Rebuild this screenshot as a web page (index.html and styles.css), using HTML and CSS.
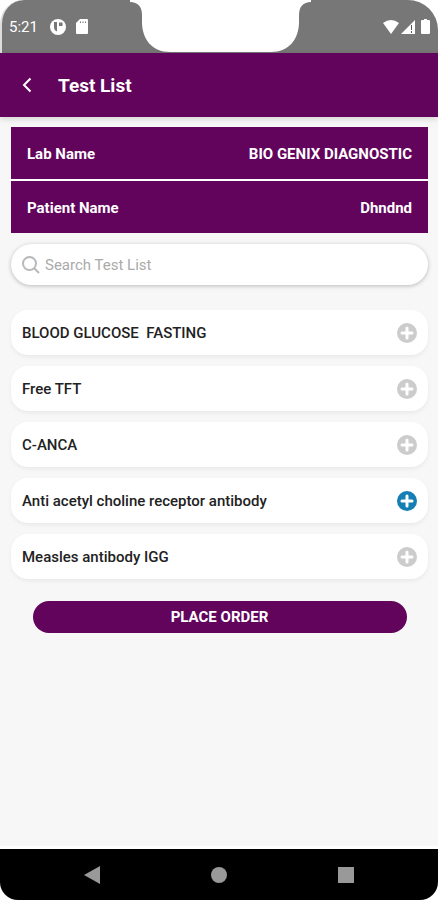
FILE: index.html
```html
<!DOCTYPE html>
<html lang="en">
<head>
  <meta charset="UTF-8" />
  <meta name="viewport" content="width=device-width, initial-scale=1" />
  <title>Test List</title>
  <link rel="stylesheet" href="styles.css">
</head>
<body>
  <div class="phone">
    <!-- Status bar -->
    <div class="status-bar">
      <div class="status-left">
        <span class="clock">5:21</span>
        <svg width="16" height="16" viewBox="0 0 16 16">
          <circle cx="8" cy="8" r="8" fill="#fff" />
          <path d="M4 3h3v9.500Q4 11.500 4 8z" fill="#777" />
          <path d="M9 3.500h3.500v3.500H9z" fill="#777" />
        </svg>
        <svg width="12" height="15" viewBox="0 0 12 15">
          <path d="M4 0h7a1 1 0 0 1 1 1v13a1 1 0 0 1-1 1H1a1 1 0 0 1-1-1V4z" fill="#fff" />
          <path d="M4 2.500h1v1.500H4zM6.500 2.500h1v1.500h-1zM9 2.500h1v1.500H9z" fill="#777" />
        </svg>
      </div>
      <svg class="notch" width="181" height="52" viewBox="0 0 181 52">
        <path d="M0 0v2c8 0 12 5 12 13v7c0 17 10 30 28 30h101c18 0 28-13 28-30v-7c0-8 4-13 12-13V0z" fill="#fff" />
      </svg>
      <div class="status-right">
        <svg width="16" height="14" viewBox="0 0 16 14">
          <path d="M0 3Q8-3 16 3L8 14z" fill="#fff" />
        </svg>
        <svg width="14" height="14" viewBox="0 0 14 14">
          <path d="M14 0v14H0z" fill="#fff" />
          <path d="M10 5h1v5h-1zM10 11h1v2h-1z" fill="#555" />
        </svg>
        <svg class="battery" width="9" height="15" viewBox="0 0 9 15">
          <path d="M3 0h3v1h2a1 1 0 0 1 1 1v12a1 1 0 0 1-1 1H1a1 1 0 0 1-1-1V2a1 1 0 0 1 1-1h2z" fill="#fff" />
        </svg>
      </div>
    </div>

    <!-- Title bar -->
    <header class="title-bar">
      <button class="back" type="button" aria-label="Back">
        <svg width="10" height="16" viewBox="0 0 10 16">
          <path d="M8.500 1.500L2 8l6.500 6.500" fill="none" stroke="#fff" stroke-width="2" />
        </svg>
      </button>
      <h1>Test List</h1>
    </header>

    <main class="content">
      <dl class="details">
        <div class="detail-row">
          <dt>Lab Name</dt>
          <dd>BIO GENIX DIAGNOSTIC</dd>
        </div>
        <div class="detail-row">
          <dt>Patient Name</dt>
          <dd>Dhndnd</dd>
        </div>
      </dl>

      <label class="search">
        <svg width="18" height="18" viewBox="0 0 18 18">
          <circle cx="7.500" cy="7.500" r="6.500" fill="none" stroke="#b9b9b9" stroke-width="2" />
          <path d="M12 12l5 5" stroke="#b9b9b9" stroke-width="2" />
        </svg>
        <input type="text" placeholder="Search Test List" aria-label="Search Test List" />
      </label>

      <ul class="tests">
        <li class="test">
          <span class="test-name">BLOOD GLUCOSE  FASTING</span>
          <button class="add" type="button" aria-label="Add BLOOD GLUCOSE FASTING">
            <svg width="20" height="20" viewBox="0 0 20 20"><circle cx="10" cy="10" r="10" /><path d="M10 5v10M5 10h10" /></svg>
          </button>
        </li>
        <li class="test">
          <span class="test-name">Free TFT</span>
          <button class="add" type="button" aria-label="Add Free TFT">
            <svg width="20" height="20" viewBox="0 0 20 20"><circle cx="10" cy="10" r="10" /><path d="M10 5v10M5 10h10" /></svg>
          </button>
        </li>
        <li class="test">
          <span class="test-name">C-ANCA</span>
          <button class="add" type="button" aria-label="Add C-ANCA">
            <svg width="20" height="20" viewBox="0 0 20 20"><circle cx="10" cy="10" r="10" /><path d="M10 5v10M5 10h10" /></svg>
          </button>
        </li>
        <li class="test">
          <span class="test-name">Anti acetyl choline receptor antibody</span>
          <button class="add selected" type="button" aria-label="Add Anti acetyl choline receptor antibody">
            <svg width="20" height="20" viewBox="0 0 20 20"><circle cx="10" cy="10" r="10" /><path d="M10 5v10M5 10h10" /></svg>
          </button>
        </li>
        <li class="test">
          <span class="test-name">Measles antibody IGG</span>
          <button class="add" type="button" aria-label="Add Measles antibody IGG">
            <svg width="20" height="20" viewBox="0 0 20 20"><circle cx="10" cy="10" r="10" /><path d="M10 5v10M5 10h10" /></svg>
          </button>
        </li>
      </ul>

      <button class="place-order" type="button">PLACE ORDER</button>
    </main>

    <!-- System navigation -->
    <nav class="system-nav">
      <button type="button" aria-label="Back">
        <svg width="18" height="20" viewBox="0 0 18 20"><path d="M17 1v18L1 10z" /></svg>
      </button>
      <button type="button" aria-label="Home">
        <svg width="18" height="20" viewBox="0 0 18 20"><circle cx="9" cy="10" r="8" /></svg>
      </button>
      <button type="button" aria-label="Recent apps">
        <svg width="18" height="20" viewBox="0 0 18 20"><path d="M1 2h16v16H1z" /></svg>
      </button>
    </nav>
  </div>
</body>
</html>
```
FILE: styles.css
```css
/* Basic reset */
* {
  box-sizing: border-box;
}
body {
  margin: 0;
  background: #fff;
  font-family: Roboto, "Liberation Sans", sans-serif;
}
button {
  padding: 0;
  border: none;
  background: none;
  font-family: inherit;
  cursor: pointer;
}
svg {
  display: block;
}
.phone {
  display: flex;
  flex-direction: column;
  min-height: 100vh;
}
/* Status bar */
.status-bar {
  display: grid;
  grid-template-columns: 1fr auto 1fr;
  height: 53px;
  background: #777;
  border-left: 2px solid #ddd;
  border-radius: 24px 30px 0 0;
  color: #fff;
}
.status-left,
.status-right {
  display: flex;
  align-items: center;
}
.status-left {
  gap: 10px;
  padding-left: 7px;
}
.status-right {
  justify-content: flex-end;
  gap: 2px;
  padding-right: 8px;
}
.battery {
  margin-left: 4px;
}
.clock {
  margin-right: 2px;
  font-size: 15px;
}
/* Title bar */
.title-bar {
  display: flex;
  align-items: center;
  gap: 26px;
  height: 64px;
  padding: 0 22px;
  background: #62045c;
  color: #fff;
  z-index: 1; /* keeps the shadow above the content */
  box-shadow: 0 2px 6px rgba(0, 0, 0, 0.15);
}
.title-bar h1 {
  margin: 0;
  font-size: 19px;
}
/* Page content */
.content {
  flex: 1;
  padding: 10px 10px 10px 11px;
  background: #f7f7f7;
  border-bottom: 3px solid #fff;
}
/* Lab and patient rows */
.details {
  display: flex;
  flex-direction: column;
  gap: 2px;
  margin: 0 0 11px;
  background: #fff;
}
.detail-row {
  display: flex;
  align-items: center;
  justify-content: space-between;
  height: 52px;
  padding: 2px 16px 0;
  background: #62045c;
  color: #fff;
  font-size: 15px;
  font-weight: bold;
}
.detail-row dd {
  margin: 0;
}
/* Search box */
.search {
  display: flex;
  align-items: center;
  gap: 5px;
  height: 41px;
  margin-bottom: 25px;
  padding: 0 11px;
  border-radius: 21px;
  background: #fff;
  box-shadow: 0 1px 4px rgba(0, 0, 0, 0.25);
}
.search input {
  flex: 1;
  min-width: 0;
  padding: 0;
  border: none;
  outline: none;
  background: none;
  font-family: inherit;
  font-size: 15px;
}
.search input::placeholder {
  color: #aaa;
}
/* Test cards */
.tests {
  display: flex;
  flex-direction: column;
  gap: 11px;
  margin: 0 0 22px;
  padding: 0;
  list-style: none;
}
.test {
  display: flex;
  align-items: center;
  justify-content: space-between;
  height: 45px;
  padding: 0 11px;
  border-radius: 17px;
  background: #fff;
  box-shadow: 0 2px 4px rgba(0, 0, 0, 0.06);
}
.test-name {
  color: #222;
  font-size: 15px;
  font-weight: 500;
  white-space: pre;
}
.add circle {
  fill: #ccc;
}
.add path {
  fill: none;
  stroke: #fff;
  stroke-width: 3;
  stroke-linecap: round;
}
.add.selected circle {
  fill: #157fb3;
}
/* Order button */
.place-order {
  display: block;
  width: calc(100% - 43px);
  height: 32px;
  margin: 0 auto;
  border-radius: 16px;
  background: #62045c;
  color: #fff;
  font-size: 15px;
  font-weight: bold;
}
/* System navigation */
.system-nav {
  display: flex;
  align-items: center;
  justify-content: center;
  gap: 109px;
  height: 51px;
  background: #000;
  border-radius: 0 0 18px 18px;
}
.system-nav svg {
  fill: #999;
}
```
